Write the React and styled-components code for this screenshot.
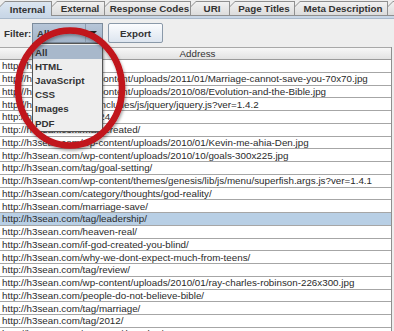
import React from 'react'
import styled, { createGlobalStyle } from 'styled-components'

const GlobalStyle = createGlobalStyle`
  html, body {
    margin: 0;
    padding: 0;
    background: #eeeeee;
  }
  body {
    font-family: "Liberation Sans", Arial, sans-serif;
    font-size: 9.8px;
    color: #222;
  }
`

const Frame = styled.div`
  position: relative;
  width: 394px;
  height: 331px;
  overflow: hidden;
  background: #eeeeee;
`

const TabBar = styled.div`
  display: flex;
  align-items: flex-end;
  height: 15px;
  border-bottom: 1px solid #8f8f8f;
`

const Tab = styled.div`
  flex: 0 0 ${(p) => p.$w}px;
  height: ${(p) => (p.$active ? 15 : 14)}px;
  margin-left: -1px;
  background: #8f8f8f;
  clip-path: polygon(0 100%, 0 6px, 6px 0, 100% 0, 100% 100%);
  padding: 1px 1px 0 1px;
  box-sizing: border-box;
  position: relative;
  z-index: ${(p) => (p.$active ? 2 : 1)};
  margin-bottom: ${(p) => (p.$active ? -1 : 0)}px;
`

const TabFace = styled.div`
  height: 100%;
  clip-path: polygon(0 100%, 0 5px, 5px 0, 100% 0, 100% 100%);
  background: ${(p) =>
    p.$active
      ? 'linear-gradient(#dce6f1, #c9d7e7)'
      : 'linear-gradient(#f1f1f1, #dcdcdc)'};
  display: flex;
  align-items: center;
  justify-content: center;
  font-weight: bold;
  color: #333;
  white-space: nowrap;
  padding-left: 4px;
`

const PaneEdge = styled.div`
  height: 2px;
  background: #c9d7e7;
  border-bottom: 1px solid #a9b9cb;
`

const Toolbar = styled.div`
  display: flex;
  align-items: center;
  height: 28px;
  padding-left: 4px;
`

const Label = styled.span`
  width: 28px;
  font-weight: bold;
  color: #333;
`

const Combo = styled.div`
  position: relative;
  display: flex;
  align-items: center;
  width: 71px;
  height: 20px;
  box-sizing: border-box;
  border: 1px solid #7d8c9c;
  background: linear-gradient(#b7c6d8, #a2b4c9);
  font-weight: bold;
  color: #333;
  padding-left: 4px;
`

const ComboArrow = styled.div`
  position: absolute;
  right: 2px;
  top: 0;
  bottom: 0;
  width: 14px;
  border-left: 1px solid #8c9cad;
  display: flex;
  align-items: center;
  justify-content: center;
  &::after {
    content: '';
    border-left: 4px solid transparent;
    border-right: 4px solid transparent;
    border-top: 4px solid #222;
  }
`

const Button = styled.div`
  width: 55px;
  height: 20px;
  box-sizing: border-box;
  border: 1px solid #8a99a9;
  border-radius: 2px;
  background: linear-gradient(#fbfcfe, #dde5ef);
  display: flex;
  align-items: center;
  justify-content: center;
  font-weight: bold;
  color: #333;
  margin-left: 5px;
`

const Table = styled.div`
  width: 391px;
  border-right: 1px solid #8f8f8f;
  background: #fff;
`

const Header = styled.div`
  height: 13px;
  box-sizing: border-box;
  border-top: 1px solid #a8a8a8;
  border-bottom: 1px solid #9a9a9a;
  background: linear-gradient(#f7f7f7, #e2e2e2);
  display: flex;
  align-items: center;
  justify-content: center;
  color: #333;
  padding-left: 4px;
`

const Row = styled.div`
  height: 12.75px;
  box-sizing: border-box;
  border-bottom: 1px solid #a6a6a6;
  background: ${(p) => (p.$selected ? '#b8cfe5' : '#fff')};
  display: flex;
  align-items: center;
  padding-left: 2px;
  white-space: nowrap;
  overflow: hidden;
  color: #2a2a2a;
`

const Popup = styled.div`
  position: absolute;
  left: 32px;
  top: 43px;
  width: 71px;
  box-sizing: border-box;
  border: 1px solid #555;
  background: #eeeeee;
  box-shadow: 1px 1px 2px rgba(0, 0, 0, 0.35);
  padding: 1px 0;
  z-index: 5;
`

const PopupItem = styled.div`
  height: 14.2px;
  display: flex;
  align-items: center;
  padding-left: 2px;
  font-weight: bold;
  color: #333;
  background: ${(p) => (p.$selected ? '#a8b8cb' : 'transparent')};
`

const Annotation = styled.svg`
  position: absolute;
  left: 0;
  top: 0;
  z-index: 10;
  pointer-events: none;
`

const tabs = [
  ['Internal', 53, true],
  ['External', 54],
  ['Response Codes', 87],
  ['URI', 40],
  ['Page Titles', 66],
  ['Meta Description', 94],
  ['', 12],
]

const rows = [
  'http://h3sean.com/',
  'http://h3sean.com/wp-content/uploads/2011/01/Marriage-cannot-save-you-70x70.jpg',
  'http://h3sean.com/wp-content/uploads/2010/08/Evolution-and-the-Bible.jpg',
  'http://h3sean.com/wp-includes/js/jquery/jquery.js?ver=1.4.2',
  'http://h3sean.com/?p=24',
  'http://h3sean.com/man-created/',
  'http://h3sean.com/wp-content/uploads/2010/01/Kevin-me-ahia-Den.jpg',
  'http://h3sean.com/wp-content/uploads/2010/10/goals-300x225.jpg',
  'http://h3sean.com/tag/goal-setting/',
  'http://h3sean.com/wp-content/themes/genesis/lib/js/menu/superfish.args.js?ver=1.4.1',
  'http://h3sean.com/category/thoughts/god-reality/',
  'http://h3sean.com/marriage-save/',
  'http://h3sean.com/tag/leadership/',
  'http://h3sean.com/heaven-real/',
  'http://h3sean.com/if-god-created-you-blind/',
  'http://h3sean.com/why-we-dont-expect-much-from-teens/',
  'http://h3sean.com/tag/review/',
  'http://h3sean.com/wp-content/uploads/2010/01/ray-charles-robinson-226x300.jpg',
  'http://h3sean.com/people-do-not-believe-bible/',
  'http://h3sean.com/tag/marriage/',
  'http://h3sean.com/tag/2012/',
  'http://h3sean.com/category/thoughts/',
]

const filters = ['All', 'HTML', 'JavaScript', 'CSS', 'Images', 'PDF']

function App() {
  return (
    <Frame>
      <GlobalStyle />
      <TabBar>
        {tabs.map(([name, w, active]) => (
          <Tab key={name + w} $w={w} $active={active}>
            <TabFace $active={active}>{name}</TabFace>
          </Tab>
        ))}
      </TabBar>
      <PaneEdge />
      <Toolbar>
        <Label>Filter:</Label>
        <Combo>
          All
          <ComboArrow />
        </Combo>
        <Button>Export</Button>
      </Toolbar>
      <Table>
        <Header>Address</Header>
        {rows.map((url, i) => (
          <Row key={i} $selected={i === 12}>
            {url}
          </Row>
        ))}
      </Table>
      <Popup>
        {filters.map((f, i) => (
          <PopupItem key={f} $selected={i === 0}>
            {f}
          </PopupItem>
        ))}
      </Popup>
      <Annotation width="394" height="331" viewBox="0 0 394 331">
        <defs>
          <filter id="shade" x="-20%" y="-20%" width="140%" height="140%">
            <feDropShadow dx="1" dy="2" stdDeviation="1.5" floodColor="#000" floodOpacity="0.35" />
          </filter>
        </defs>
        <ellipse
          cx="70"
          cy="88"
          rx="52"
          ry="57.5"
          fill="none"
          stroke="#c1121a"
          strokeWidth="6.5"
          filter="url(#shade)"
        />
      </Annotation>
    </Frame>
  )
}

export default App
